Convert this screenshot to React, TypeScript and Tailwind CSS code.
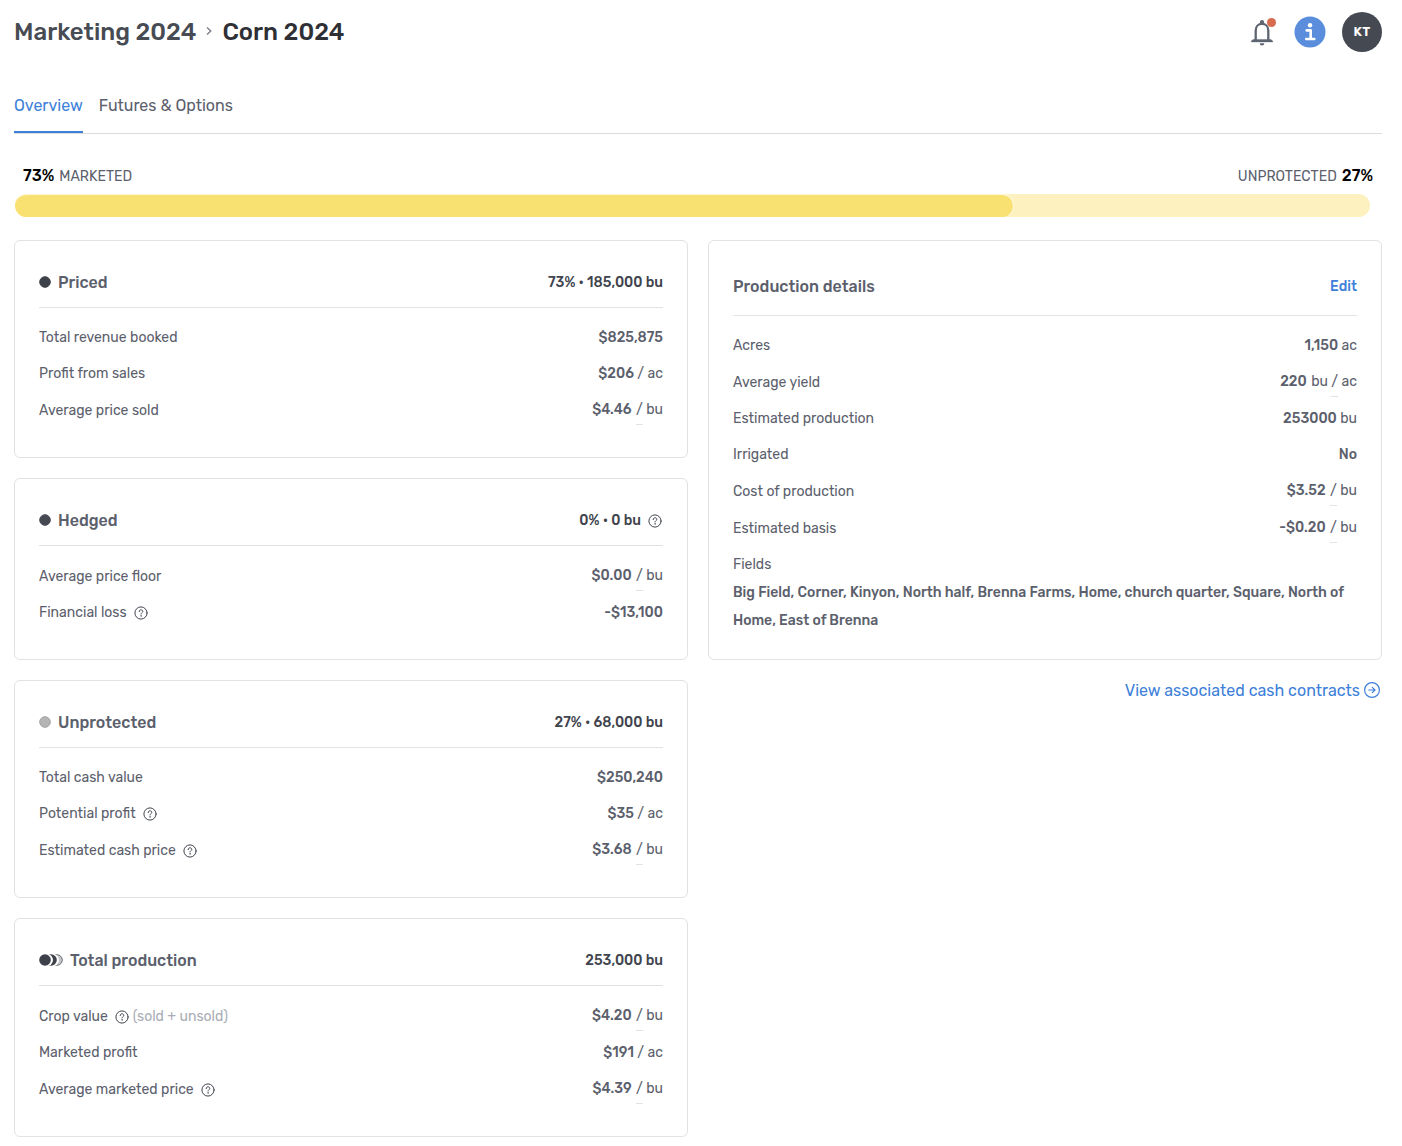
import React from 'react';

const HelpIcon = () => (
  <svg className="size-[14px] shrink-0" viewBox="0 0 14 14" fill="none" stroke="#40444d" strokeLinecap="round">
    <circle cx="7" cy="7" r="6.1" strokeWidth="1" />
    <path d="M5.2 5.6c0-1.1.8-1.8 1.8-1.8s1.8.7 1.8 1.6c0 1.2-1.8 1.3-1.8 2.6" strokeWidth="1" />
    <circle cx="7" cy="9.9" r=".3" fill="#40444d" strokeWidth=".6" />
  </svg>
);

const BellIcon = () => (
  <svg className="h-7 w-6" viewBox="0 0 24 28" fill="none">
    <path d="M5.7 22.500V12.500c0-4 2.600-6.600 6.300-6.600s6.300 2.600 6.300 6.600v10" stroke="#5e6470" strokeWidth="2.300" />
    <path d="M3 21.400h18l1.700 1.700v.8H1.300v-.8z" fill="#5e6470" stroke="#5e6470" strokeWidth=".4" strokeLinejoin="round" />
    <path d="M9.900 6V4a2.100 2.100 0 0 1 4.200 0v2z" fill="#5e6470" />
    <path d="M9.700 25.200h4.600a2.300 2.300 0 0 1-4.600 0z" fill="#5e6470" />
  </svg>
);

const InfoIcon = () => (
  <svg className="size-8" viewBox="0 0 32 32" fill="none">
    <circle cx="16" cy="16" r="15.5" fill="#5a8edd" />
    <circle cx="16" cy="9.3" r="2.2" fill="#fff" />
    <path d="M12.7 14.4h4v8.4M12.3 23h8" stroke="#fff" strokeWidth="2.6" strokeLinecap="round" strokeLinejoin="round" />
  </svg>
);

const ArrowCircleIcon = () => (
  <svg className="mb-0.5 size-4" viewBox="0 0 16 16" fill="none" stroke="currentColor" strokeLinecap="round" strokeLinejoin="round">
    <circle cx="8" cy="8" r="7.4" strokeWidth="1.2" />
    <path d="M4.8 8h6M8.3 5.3 11 8l-2.7 2.7" strokeWidth="1.2" />
  </svg>
);

const Dot = ({ fill, stroke }: { fill: string; stroke: string }) => (
  <svg className="mb-0.5 size-3" viewBox="0 0 12 12">
    <circle cx="6" cy="6" r="5.3" fill={fill} stroke={stroke} />
  </svg>
);

const TripleDot = () => (
  <svg className="mb-0.5 h-3 w-6" viewBox="0 0 24 12">
    <circle cx="18" cy="6" r="5.3" fill="#c4c5c8" stroke="#6f737b" />
    <circle cx="14" cy="6" r="6" fill="#fff" />
    <circle cx="12" cy="6" r="5.8" fill="#3d4149" />
    <circle cx="8" cy="6" r="6" fill="#fff" />
    <circle cx="6" cy="6" r="5.8" fill="#3d4149" />
  </svg>
);

type Item = {
  label: string;
  value: string;
  unit?: string;
  marked?: boolean;
  help?: boolean;
  note?: string;
};

const Row = ({ label, value, unit, marked, help, note }: Item) => (
  <div className={marked ? 'flex h-[37px] items-center justify-between' : 'flex h-9 items-center justify-between'}>
    <dt className="flex items-center">
      {label}
      {help && <button aria-label={`About ${label}`} className="ml-[7px]"><HelpIcon /></button>}
      {note && <span className="ml-1 text-[#a9acb5]">{note}</span>}
    </dt>
    <dd className={marked ? 'pb-0.5' : ''}>
      <span className={marked ? 'mr-px font-medium' : 'font-medium'}>{value}</span>
      {unit && !marked && ` ${unit}`}
      {unit && marked && (
        <>
          {unit.startsWith('bu / ') ? ' bu ' : ' '}
          <span className="border-b border-[#dfe1e5] pb-[6px]">/</span>
          {unit.endsWith('ac') ? ' ac' : ' bu'}
        </>
      )}
    </dd>
  </div>
);

type CardProps = {
  icon: React.ReactNode;
  title: string;
  total: string;
  help?: boolean;
  items: Item[];
};

const SummaryCard = ({ icon, title, total, help, items }: CardProps) => (
  <section className="rounded-md border border-[#e1e2e5] px-6 pt-4 pb-7">
    <div className="flex h-[51px] items-center justify-between border-b border-[#e1e2e5] pt-0.5">
      <h2 className="flex items-center gap-[7px] text-base font-medium">
        {icon}
        {title}
      </h2>
      <p className="flex items-center font-medium text-[#40444d]">
        {total}
        {help && <button aria-label={`About ${title}`} className="mr-px ml-[7px]"><HelpIcon /></button>}
      </p>
    </div>
    <dl className="mt-3">
      {items.map((item) => (
        <Row key={item.label} {...item} />
      ))}
    </dl>
  </section>
);

const cards: CardProps[] = [
  {
    icon: <Dot fill="#3d4149" stroke="#3d4149" />,
    title: 'Priced',
    total: '73% • 185,000 bu',
    items: [
      { label: 'Total revenue booked', value: '$825,875' },
      { label: 'Profit from sales', value: '$206', unit: '/ ac' },
      { label: 'Average price sold', value: '$4.46', unit: '/ bu', marked: true },
    ],
  },
  {
    icon: <Dot fill="#454952" stroke="#454952" />,
    title: 'Hedged',
    total: '0% • 0 bu',
    help: true,
    items: [
      { label: 'Average price floor', value: '$0.00', unit: '/ bu', marked: true },
      { label: 'Financial loss', value: '-$13,100', help: true },
    ],
  },
  {
    icon: <Dot fill="#b5b5b5" stroke="#a0a1a4" />,
    title: 'Unprotected',
    total: '27% • 68,000 bu',
    items: [
      { label: 'Total cash value', value: '$250,240' },
      { label: 'Potential profit', value: '$35', unit: '/ ac', help: true },
      { label: 'Estimated cash price', value: '$3.68', unit: '/ bu', marked: true, help: true },
    ],
  },
  {
    icon: <TripleDot />,
    title: 'Total production',
    total: '253,000 bu',
    items: [
      { label: 'Crop value', value: '$4.20', unit: '/ bu', marked: true, help: true, note: '(sold + unsold)' },
      { label: 'Marketed profit', value: '$191', unit: '/ ac' },
      { label: 'Average marketed price', value: '$4.39', unit: '/ bu', marked: true, help: true },
    ],
  },
];

const details: Item[] = [
  { label: 'Acres', value: '1,150', unit: 'ac' },
  { label: 'Average yield', value: '220', unit: 'bu / ac', marked: true },
  { label: 'Estimated production', value: '253000', unit: 'bu' },
  { label: 'Irrigated', value: 'No' },
  { label: 'Cost of production', value: '$3.52', unit: '/ bu', marked: true },
  { label: 'Estimated basis', value: '-$0.20', unit: '/ bu', marked: true },
];

export default function App() {
  return (
    <div className="min-h-screen bg-white pr-5 pb-2 pl-[14px] font-['Rubik','Roboto',sans-serif] text-sm text-[#5b606c]">
      <header className="flex h-16 items-center justify-between">
        <h1 className="flex items-center text-2xl font-medium text-[#474b54]">
          <a href="#marketing">Marketing 2024</a>
          <svg className="mx-[10px] mb-0.5 h-2 w-[6px]" viewBox="0 0 6 8" fill="none" stroke="#767b86" strokeWidth="1.3">
            <path d="m1 .5 3.8 3.5L1 7.5" />
          </svg>
          <span className="text-[#2f3036]">Corn 2024</span>
        </h1>
        <div className="flex items-center gap-4">
          <button aria-label="Notifications" className="relative mr-1">
            <BellIcon />
            <span className="absolute top-0 -right-0.5 size-[9px] rounded-full bg-[#d86c4f]" />
          </button>
          <button aria-label="Information"><InfoIcon /></button>
          <button className="size-10 rounded-full bg-[#454952] text-[13px] font-semibold tracking-wide text-white">KT</button>
        </div>
      </header>

      <nav className="mt-[14px] flex h-14 gap-4 border-b border-[#d9dbdf] text-base">
        <a href="#overview" className="border-b-2 border-[#3d7fd9] pt-4 text-[#3d7fd9]">Overview</a>
        <a href="#futures" className="pt-4">Futures &amp; Options</a>
      </nav>

      <main>
        <div className="mt-[30px] flex justify-between px-[9px]">
          <p className="flex items-baseline gap-[5px]">
            <span className="text-base font-medium text-black">73%</span>
            <span>MARKETED</span>
          </p>
          <p className="flex items-baseline gap-[5px]">
            <span>UNPROTECTED</span>
            <span className="text-base font-medium text-black">27%</span>
          </p>
        </div>
        <div className="mt-[6px] mr-3 ml-px h-[23px] rounded-full bg-[#fef1c0]">
          <div className="h-full w-[73.7%] rounded-full border-t border-r border-[#fff6d6] bg-[#f9e171] bg-clip-padding" />
        </div>

        <div className="mt-[23px] grid grid-cols-2 items-start gap-5">
          <div className="flex flex-col gap-5">
            {cards.map((card) => (
              <SummaryCard key={card.title} {...card} />
            ))}
          </div>

          <div>
            <section className="rounded-md border border-[#e1e2e5] px-6 pt-4 pb-5">
              <div className="flex h-[59px] items-center justify-between border-b border-[#e1e2e5] pt-0.5">
                <h2 className="text-base font-medium">Production details</h2>
                <button className="font-medium text-[#3d7fd9]">Edit</button>
              </div>
              <dl className="mt-3">
                {details.map((item) => (
                  <Row key={item.label} {...item} />
                ))}
                <div className="py-1 leading-7">
                  <dt>Fields</dt>
                  <dd className="font-medium">
                    Big Field, Corner, Kinyon, North half, Brenna Farms, Home, church quarter, Square, North of Home, East of Brenna
                  </dd>
                </div>
              </dl>
            </section>
            <div className="mt-[19px] flex justify-end pr-[2px]">
              <a href="#contracts" className="flex items-center gap-1 text-base text-[#3d7fd9]">
                View associated cash contracts
                <ArrowCircleIcon />
              </a>
            </div>
          </div>
        </div>
      </main>
    </div>
  );
}
